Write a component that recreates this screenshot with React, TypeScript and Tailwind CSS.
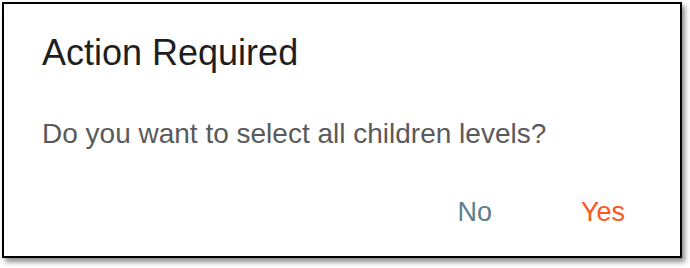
import React from 'react';

export default function App() {
  return (
    <div className="w-[690px] h-[268px] bg-white pt-[2px] pl-[2px]" style={{ fontFamily: '"Liberation Sans", Arial, sans-serif' }}>
      <div className="w-[680px] h-[256px] bg-white border-2 border-black shadow-[3px_4px_5px_rgba(0,0,0,0.45)] flex flex-col pl-[38px] pr-[55px]">
        {/* Title */}
        <h2 className="mt-[29px] text-[36px] leading-[40px] text-[#1f1f1f]">Action Required</h2>

        {/* Message */}
        <p className="mt-[44px] text-[28px] leading-[34px] text-[#5a5a5a]">
          Do you want to select all children levels?
        </p>

        {/* Actions */}
        <div className="mt-[45px] flex justify-end gap-[89px] text-[27px] leading-[32px]">
          <button className="text-[#607d8b]">No</button>
          <button className="text-[#ff5722]">Yes</button>
        </div>
      </div>
    </div>
  );
}
